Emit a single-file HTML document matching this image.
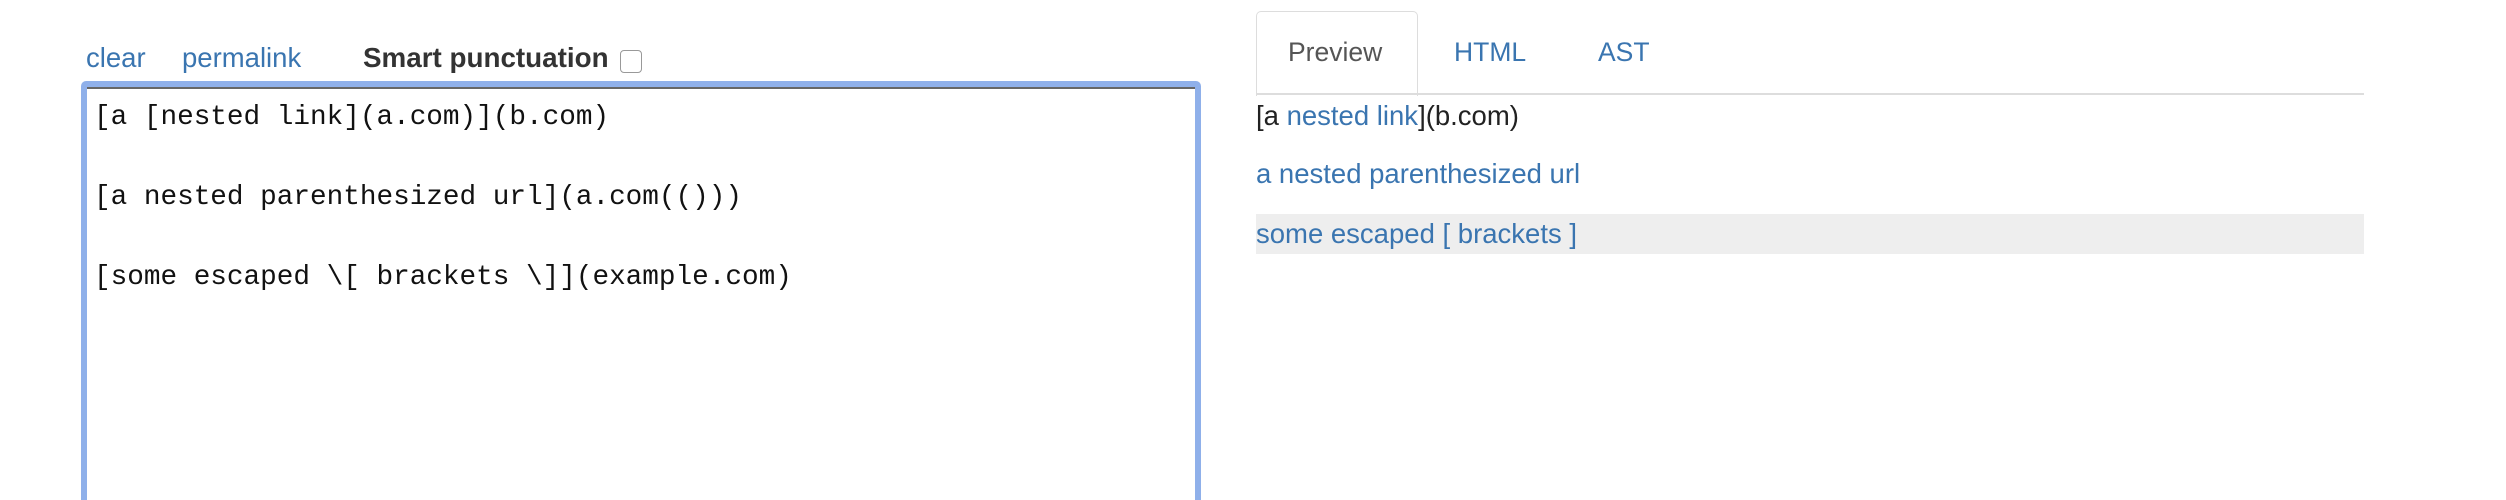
<!DOCTYPE html>
<html><head><meta charset="utf-8"><style>
html,body{margin:0;padding:0;width:2506px;height:500px;overflow:hidden;background:#fff;font-family:"Liberation Sans",sans-serif;}
.a{color:#3a75b0;}
.abs{position:absolute;white-space:pre;}
</style></head><body>
<div class="abs a" style="left:86px;top:42px;font-size:27.5px;">clear</div>
<div class="abs a" style="left:182px;top:42px;font-size:27.5px;">permalink</div>
<div class="abs" style="left:363px;top:42px;font-size:27.8px;font-weight:bold;color:#333;">Smart punctuation</div>
<div class="abs" style="left:620px;top:50px;width:20px;height:21px;border:1.5px solid #999;border-radius:4px;background:#fff;"></div>
<div class="abs" style="left:81px;top:81px;width:1120px;height:419px;background:#8fb0ea;border-radius:5px 5px 0 0;"></div>
<div class="abs" style="left:87px;top:87px;width:1108px;height:411px;background:#fff;border-top:2px solid #666;"></div>
<div class="abs" style="left:94px;top:98px;font-family:'Liberation Mono',monospace;font-size:27.7px;line-height:40px;color:#111;">[a [nested link](a.com)](b.com)

[a nested parenthesized url](a.com(()))

[some escaped \[ brackets \]](example.com)</div>

<div class="abs" style="left:1256px;top:11px;width:160px;height:84px;border:1.5px solid #ddd;border-bottom:none;border-radius:5px 5px 0 0;background:#fff;"></div>
<div class="abs" style="left:1256px;top:93px;width:1108px;height:2px;background:#ddd;"></div>
<div class="abs" style="left:1288px;top:37px;font-size:26.5px;color:#555;">Preview</div>
<div class="abs a" style="left:1454px;top:37px;font-size:26.5px;">HTML</div>
<div class="abs a" style="left:1598px;top:37px;font-size:26.5px;">AST</div>
<div class="abs" style="left:1256px;top:214px;width:1108px;height:40px;background:#eee;"></div>
<div class="abs" style="left:1256px;top:100px;font-size:27.5px;color:#222;">[a <span class="a">nested link</span>](b.com)</div>
<div class="abs a" style="left:1256px;top:158px;font-size:27.5px;">a nested parenthesized url</div>
<div class="abs a" style="left:1256px;top:218px;font-size:27.5px;">some escaped [ brackets ]</div>
</body></html>
